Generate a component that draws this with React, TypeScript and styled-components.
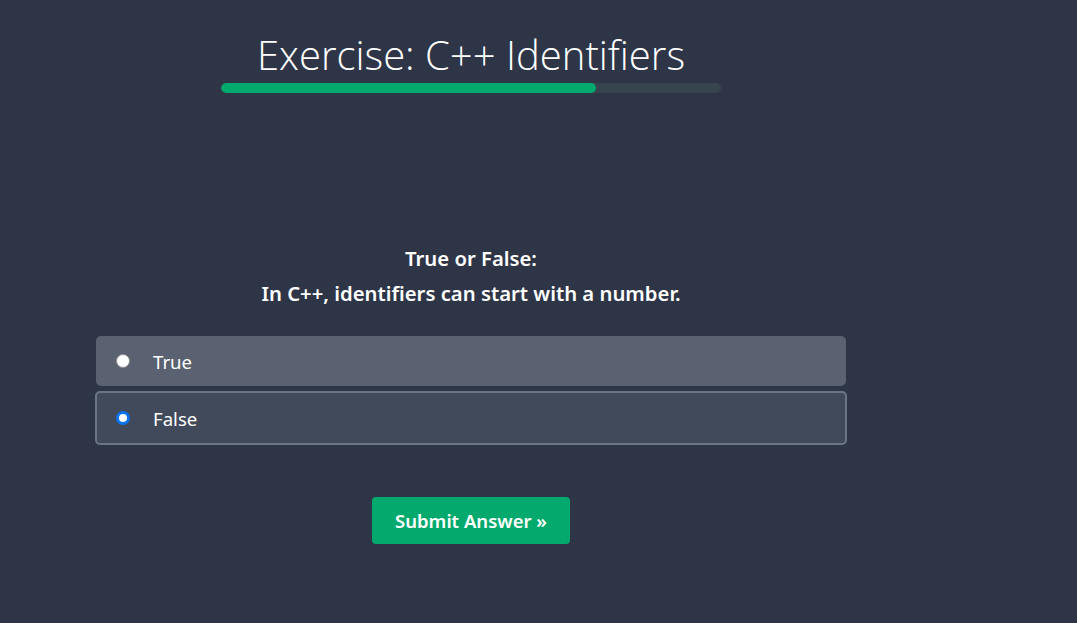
import React, { useState } from "react";
import styled, { createGlobalStyle } from "styled-components";

const Global = createGlobalStyle`
  html, body { margin: 0; padding: 0; background: #2d3547; }
  body { font-family: "Noto Sans", "Open Sans", sans-serif; color: #fff; }
`;

const Page = styled.div`
  width: 942px;
  min-height: 623px;
  display: flex;
  flex-direction: column;
  align-items: center;
`;

const Header = styled.div`
  width: 500px;
  display: flex;
  flex-direction: column;
  align-items: center;
  padding-top: 31px;
`;

const Title = styled.h1`
  margin: 0;
  font-family: "Open Sans", sans-serif;
  font-weight: 300;
  font-size: 40px;
  line-height: 48px;
  color: #fff;
  white-space: nowrap;
`;

const Track = styled.div`
  width: 500px;
  height: 10px;
  border-radius: 5px;
  background: #38444d;
  margin-top: 4px;
  overflow: hidden;
`;

const Fill = styled.div`
  height: 100%;
  background: #04aa6d;
  border-radius: 5px;
`;

const Question = styled.div`
  margin-top: 148px;
  text-align: center;
  font-family: "Noto Sans", sans-serif;
  font-weight: 600;
  font-size: 20.3px;
  line-height: 35px;
`;

const Options = styled.div`
  margin-top: 25px;
  width: 752px;
  display: flex;
  flex-direction: column;
  gap: 5px;
`;

const Option = styled.label<{ $selected: boolean }>`
  box-sizing: border-box;
  display: flex;
  align-items: center;
  height: ${(p) => (p.$selected ? "54px" : "50px")};
  margin: ${(p) => (p.$selected ? "0" : "0 1px")};
  padding-left: ${(p) => (p.$selected ? "19px" : "20px")};
  border-radius: 5px;
  background: ${(p) => (p.$selected ? "#414a5a" : "#5a6170")};
  border: ${(p) => (p.$selected ? "2px solid #6c7585" : "none")};
  cursor: pointer;
  font-family: "Noto Sans", sans-serif;
  font-size: 18.6px;
  color: #fff;
`;

const Radio = styled.span<{ $checked: boolean }>`
  box-sizing: border-box;
  width: 14px;
  height: 14px;
  border-radius: 50%;
  background: #fff;
  border: ${(p) => (p.$checked ? "3px solid #0b72f0" : "1px solid #8f8f8f")};
  margin-right: 23px;
  flex-shrink: 0;
`;

const Submit = styled.button`
  margin-top: 52px;
  width: 198px;
  height: 47px;
  border: none;
  border-radius: 4px;
  background: #04aa6d;
  color: #fff;
  font-family: "Noto Sans", sans-serif;
  font-weight: 600;
  font-size: 18.5px;
  cursor: pointer;
`;

export default function App() {
  const [sel, setSel] = useState(1);
  const opts = ["True", "False"];
  return (
    <>
      <Global />
      <Page>
        <Header>
          <Title>Exercise: C++ Identifiers</Title>
          <Track>
            <Fill style={{ width: "75%" }} />
          </Track>
        </Header>
        <Question>
          True or False:
          <br />
          In C++, identifiers can start with a number.
        </Question>
        <Options>
          {opts.map((o, i) => (
            <Option key={o} $selected={sel === i} onClick={() => setSel(i)}>
              <Radio $checked={sel === i} />
              {o}
            </Option>
          ))}
        </Options>
        <Submit>Submit Answer »</Submit>
      </Page>
    </>
  );
}
